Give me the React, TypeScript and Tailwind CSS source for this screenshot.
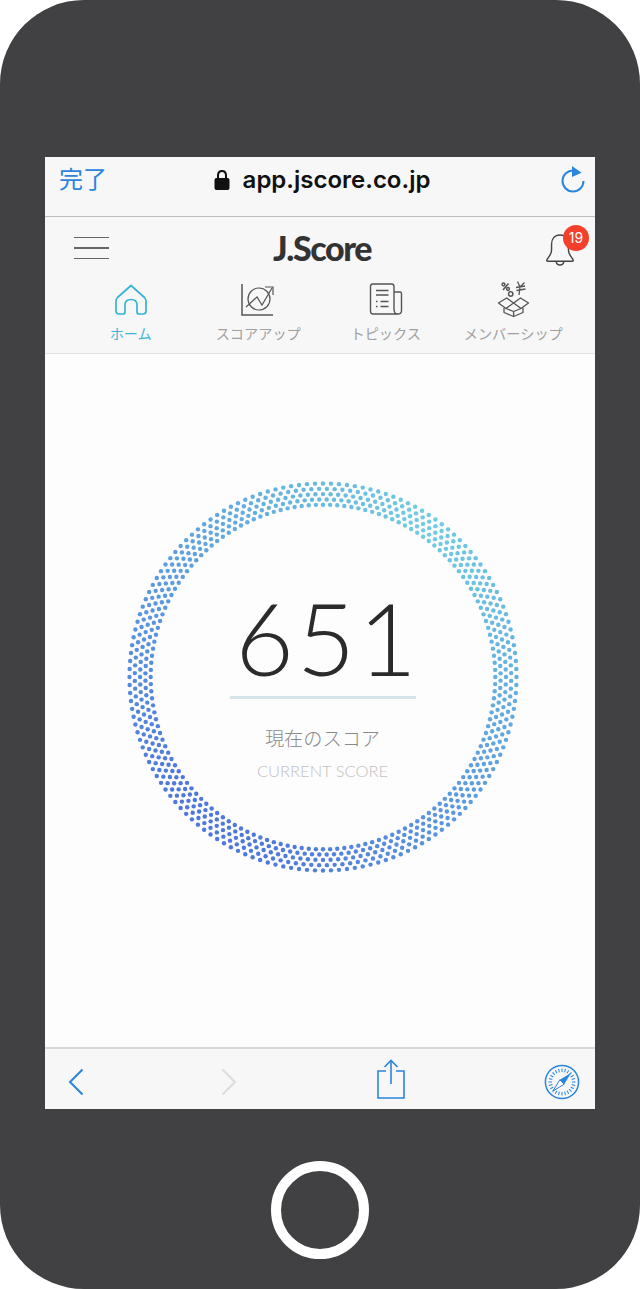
import React from "react";

const blue = "#2a85dc";

const navItems = [
  { label: "ホーム", active: true, icon: <HomeIcon /> },
  { label: "スコアアップ", active: false, icon: <ChartIcon /> },
  { label: "トピックス", active: false, icon: <NewsIcon /> },
  { label: "メンバーシップ", active: false, icon: <BoxIcon /> },
];

function HomeIcon() {
  return (
    <svg width="36" height="36" viewBox="0 0 36 36" fill="none" stroke="#35b4d6" strokeWidth="1.7" strokeLinejoin="round">
      <path d="M18 3.5 L31.5 15.5 C32.6 16.6 33 17.6 33 19 L33 29 C33 31 32 32 30 32 L26 32 C24.8 32 24 31.2 24 30 L24 23 C24 19.6 21.6 17.5 18 17.5 C14.4 17.5 12 19.6 12 23 L12 30 C12 31.2 11.2 32 10 32 L6 32 C4 32 3 31 3 29 L3 19 C3 17.6 3.4 16.6 4.5 15.5 Z" />
    </svg>
  );
}

function ChartIcon() {
  return (
    <svg width="36" height="36" viewBox="0 0 36 36" fill="none" stroke="#555" strokeWidth="1.2">
      <path d="M2 2 V33 H33" strokeWidth="1.5" />
      <circle cx="19" cy="17" r="11" />
      <path d="M6 25 L17 15 L22 23 L32 6" />
      <path d="M25 5 H33 V13" />
    </svg>
  );
}

function NewsIcon() {
  return (
    <svg width="36" height="36" viewBox="0 0 36 36" fill="none" stroke="#555" strokeWidth="1.4" strokeLinejoin="round">
      <path d="M26 27 V4.5 C26 3 25 2 23.5 2 H5 C3.5 2 2.5 3 2.5 4.5 V29 C2.5 31 3.5 32 5 32 H29.5 C27.5 32 26 30 26 27 Z" />
      <path d="M26 10 H32 C33 10 33.5 10.6 33.5 11.5 V29 C33.5 31 32 32 29.5 32" />
      <path d="M8 8.5 H20.5 M8 13 H20.5 M8 19.5 H9.5 M12.5 19.5 H20.5 M8 24.5 H9.5 M12.5 24.5 H20.5" />
    </svg>
  );
}

function BoxIcon() {
  return (
    <svg width="36" height="38" viewBox="0 0 36 38" fill="none" stroke="#555" strokeWidth="1.3" strokeLinejoin="round">
      <path d="M9 27 V31.5 L18.6 35.5 L28 31.5 V27" />
      <path d="M18.6 30.5 V35.5" />
      <path d="M18.6 22 L11.7 17 L3.5 22 L11 27.5 L18.6 22 L26 27.5 L33.5 22 L25.5 17 L18.6 22" />
      <path d="M11 27.5 L18.6 30.5 L26 27.5" />
      {/* percent sign */}
      <circle cx="8.5" cy="3.5" r="1.4" strokeWidth="1.5" />
      <circle cx="13" cy="8" r="1.4" strokeWidth="1.5" />
      <path d="M13.5 2.5 L8 9" strokeWidth="1.6" />
      {/* gear */}
      <circle cx="15.7" cy="13" r="2.2" strokeWidth="1.5" />
      {/* yen sign, tilted */}
      <path d="M22.5 0.5 L25 6 L29.5 1.5 M21 6.5 L30 5 M21.5 9.5 L30.5 8 M25 6 L24 14" />
    </svg>
  );
}

function BellIcon() {
  return (
    <svg width="30" height="34" viewBox="0 0 32 36" fill="none" stroke="#444" strokeWidth="1.5" strokeLinejoin="round">
      <path d="M16 3 C10 3 7 7.5 7 13 L7 19 C7 24 4 26 2 29.5 C1.6 30.3 2 31 3 31 L29 31 C30 31 30.4 30.3 30 29.5 C28 26 25 24 25 19 L25 13 C25 7.5 22 3 16 3 Z" />
      <path d="M12 31 C12 33.5 13.6 35 16 35 C18.4 35 20 33.5 20 31" />
    </svg>
  );
}

function ReloadIcon() {
  return (
    <svg width="26" height="30" viewBox="0 0 26 30" fill="none" className="mt-[2px]">
      <path d="M12.5 6.5 A10.5 10.5 0 1 0 22.5 17" stroke={blue} strokeWidth="2" />
      <path d="M11 2 L20.5 8.7 L11 13 Z" fill={blue} />
    </svg>
  );
}

function LockIcon() {
  return (
    <svg width="16" height="22" viewBox="0 0 16 22" fill="none">
      <path d="M4 10 V6.5 C4 3.8 5.6 2 8 2 C10.4 2 12 3.8 12 6.5 V10" stroke="#111" strokeWidth="2" />
      <rect x="0.5" y="9" width="15" height="12" rx="2" fill="#111" />
    </svg>
  );
}

function ChevronIcon({ dir, color }: { dir: "left" | "right"; color: string }) {
  return (
    <svg width="16" height="28" viewBox="0 0 16 28" fill="none" stroke={color} strokeWidth="2">
      <path d={dir === "left" ? "M14.5 1.5 L2 14 L14.5 26.5" : "M1.5 1.5 L14 14 L1.5 26.5"} />
    </svg>
  );
}

function ShareIcon() {
  return (
    <svg width="28" height="40" viewBox="0 0 28 40" fill="none" stroke={blue} strokeWidth="1.6">
      <path d="M9 12 H1 V39 H27 V12 H19" />
      <path d="M14 1.5 V25" />
      <path d="M7.5 8 L14 1.5 L20.5 8" />
    </svg>
  );
}

function CompassIcon() {
  const ticks = Array.from({ length: 24 }, (_, i) => (i * 360) / 24);
  return (
    <svg width="36" height="36" viewBox="0 0 36 36" fill="none">
      <circle cx="18" cy="18" r="16.6" stroke={blue} strokeWidth="1.5" />
      {ticks.map((a) => (
        <path key={a} d="M18 4.5 V8" stroke={blue} strokeWidth="1" transform={`rotate(${a} 18 18)`} />
      ))}
      <path d="M27 9 L15.8 15.8 L20.2 20.2 Z" fill={blue} />
      <path d="M9 27 L15.8 15.8 L20.2 20.2 Z" fill="#fff" stroke={blue} strokeWidth="1" />
    </svg>
  );
}

// colour follows the angle: light teal top right, deep blue at the bottom
function dotColor(deg: number) {
  const d = Math.abs(((deg - 35 + 540) % 360) - 180);
  const k = Math.min(1, (d / 180) * 1.12);
  const r = Math.round(112 + (78 - 112) * k);
  const g = Math.round(205 + (120 - 205) * k);
  const b = Math.round(225 + (222 - 225) * k);
  return `rgb(${r},${g},${b})`;
}

function ScoreRing() {
  const rows = [193.5, 188.2, 182.9, 177.6, 172.3];
  const perRow = 152;
  const dots: React.ReactNode[] = [];
  rows.forEach((radius, ri) => {
    for (let i = 0; i < perRow; i++) {
      const deg = ((i + (ri % 2 ? 0.5 : 0)) * 360) / perRow;
      const rad = (deg * Math.PI) / 180;
      dots.push(
        <circle
          key={`${ri}-${i}`}
          cx={196 + radius * Math.sin(rad)}
          cy={196 - radius * Math.cos(rad)}
          r={2.2}
          fill={dotColor(deg)}
        />
      );
    }
  });
  return (
    <svg width="392" height="392" viewBox="0 0 392 392" className="col-start-1 row-start-1">
      {dots}
    </svg>
  );
}

export default function App() {
  return (
    <div className="w-[640px] h-[1289px] bg-white overflow-hidden" style={{ fontFamily: '"Noto Sans CJK JP", "Noto Sans", sans-serif' }}>
      <div className="w-[640px] h-[1289px] rounded-[84px] bg-[#414143] flex flex-col items-center pt-[157px]">
        <div className="w-[550px] h-[952px] flex flex-col bg-[#f7f7f7]">
          {/* safari url bar */}
          <div className="h-[60px] shrink-0 flex items-start justify-between pl-[14px] pr-[8px] pt-[5px] border-b border-[#bdbdbd]">
            <span className="text-[24px] leading-[32px] text-[#2a85dc]">完了</span>
            <div className="flex items-center gap-[13px] h-[36px] mr-[24px]">
              <LockIcon />
              <span className="text-[24px] font-semibold text-[#111]" style={{ fontFamily: "Inter, sans-serif" }}>app.jscore.co.jp</span>
            </div>
            <ReloadIcon />
          </div>

          {/* app header */}
          <div className="h-[137px] shrink-0 flex flex-col border-b border-[#e2e2e2]">
            <div className="h-[56px] flex items-center justify-between pl-[29px] pr-[20px] relative">
              <div className="flex flex-col gap-[9px] w-[35px] mt-[6px]">
                <div className="h-[1.5px] bg-[#666]" />
                <div className="h-[1.5px] bg-[#666]" />
                <div className="h-[1.5px] bg-[#666]" />
              </div>
              <span className="text-[34px] leading-[40px] font-black tracking-[-1.4px] text-[#333] mr-[10px] mt-[6px]" style={{ fontFamily: "Lato, sans-serif" }}>J.Score</span>
              <div className="relative mt-[7px]">
                <BellIcon />
                <span className="absolute -top-[7px] left-[18px] w-[26px] h-[26px] rounded-full bg-[#f4402a] text-white text-[14px] flex items-center justify-center" style={{ fontFamily: "Inter, sans-serif" }}>19</span>
              </div>
            </div>
            <div className="grid grid-cols-4 pl-[22px] pr-[18px]">
              {navItems.map((item) => (
                <div key={item.label} className="flex flex-col items-center">
                  <div className="h-[42px] mt-[6px] mb-[2px] flex items-center justify-center">{item.icon}</div>
                  <span className={`text-[14.2px] leading-[20px] whitespace-nowrap ${item.active ? "text-[#3db6d8]" : "text-[#a0a0a0]"}`}>{item.label}</span>
                </div>
              ))}
            </div>
          </div>

          {/* score */}
          <div className="flex-1 bg-[#fdfdfd] flex justify-center pt-[127px]">
            <div className="grid w-[392px] h-[392px] ml-[5px]">
              <ScoreRing />
              <div className="col-start-1 row-start-1 flex flex-col items-center pt-[96px]">
                <span className="text-[101px] leading-[120px] font-light text-[#2b2b2b] tracking-[3px] ml-[10px]" style={{ fontFamily: "Lato, sans-serif" }}>651</span>
                <div className="w-[186px] h-[3px] bg-[#d5e3ea] -mt-[1px]" />
                <span className="text-[19.2px] leading-[28px] font-light text-[#8a8a8a] mt-[25px]">現在のスコア</span>
                <span className="text-[16.5px] leading-[20px] font-light text-[#c2c2c2] mt-[9px]" style={{ fontFamily: "Lato, sans-serif" }}>CURRENT SCORE</span>
              </div>
            </div>
          </div>

          {/* bottom toolbar */}
          <div className="h-[62px] shrink-0 flex items-center pl-[23px] pr-[15px] pt-[6px] border-t-2 border-[#d8d8d2]">
            <ChevronIcon dir="left" color={blue} />
            <div className="ml-[137px]"><ChevronIcon dir="right" color="#dcdcdc" /></div>
            <div className="mb-[6px] ml-[140px]"><ShareIcon /></div>
            <div className="ml-auto"><CompassIcon /></div>
          </div>
        </div>

        <div className="w-[98px] h-[98px] rounded-full border-[10px] border-white mt-[52px]" />
      </div>
    </div>
  );
}
